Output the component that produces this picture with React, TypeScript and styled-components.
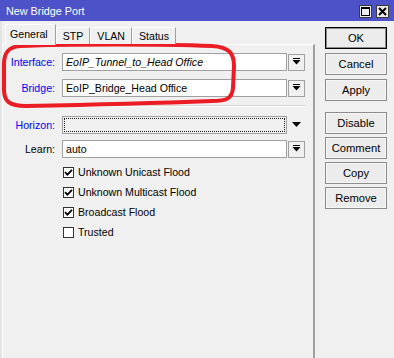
import React from 'react';
import styled, { createGlobalStyle } from 'styled-components';

const GlobalStyle = createGlobalStyle`
  html, body {
    margin: 0;
    padding: 0;
    background: #f0f0f0;
  }
  body {
    font-family: "Liberation Sans", Arial, sans-serif;
    font-size: 10.6px;
    color: #000;
  }
`;

const Window = styled.div`
  position: relative;
  width: 394px;
  height: 358px;
  overflow: hidden;
  display: flex;
  flex-direction: column;
  background: #f0f0f0;
`;

const TitleBar = styled.div`
  height: 21px;
  flex: none;
  display: flex;
  align-items: center;
  padding: 0 5px 0 6px;
  background: #4d52c9;
  color: #fff;
  font-size: 10.8px;
`;

const TitleText = styled.span`
  flex: 1;
  padding-top: 1px;
`;

const TitleButtons = styled.div`
  display: flex;
  gap: 4px;
  margin-top: 2px;
`;

const TitleButton = styled.div`
  width: 13px;
  height: 13px;
  box-sizing: border-box;
  background: #ececec;
  border: 1px solid #3a3a3a;
  display: flex;
  align-items: center;
  justify-content: center;
`;

const Body = styled.div`
  flex: 1;
  display: flex;
  padding-top: 3px;
  border-left: 2px solid #e4e4e4;
  min-height: 0;
`;

const TabArea = styled.div`
  width: 313px;
  display: flex;
  flex-direction: column;
`;

const TabStrip = styled.div`
  display: flex;
  align-items: flex-end;
  height: 20px;
  padding-left: 3px;
  position: relative;
  z-index: 1;
`;

const Tab = styled.div<{ $active?: boolean }>`
  box-sizing: border-box;
  height: ${p => (p.$active ? '21px' : '17px')};
  margin-bottom: ${p => (p.$active ? '-1px' : '0')};
  padding: ${p => (p.$active ? '3px 7px 0 4px' : '2px 6px 0')};
  background: #f0f0f0;
  border-top: 1px solid #fff;
  border-left: 1px solid #fff;
  border-right: 1px solid #a0a0a0;
  white-space: nowrap;
`;

const Panel = styled.div`
  flex: 1;
  box-sizing: border-box;
  border-top: 1px solid #fff;
  border-left: 1px solid #fff;
  border-right: 2px solid #a0a0a0;
  padding: 8px 8px 0 0;
  display: flex;
  flex-direction: column;
`;

const Row = styled.div<{ $gap?: number }>`
  display: flex;
  align-items: center;
  height: 18px;
  margin-bottom: ${p => p.$gap ?? 8}px;
`;

const Label = styled.span<{ $blue?: boolean }>`
  width: 52px;
  margin-right: 7px;
  text-align: right;
  color: ${p => (p.$blue ? '#0000ff' : '#000')};
`;

const Field = styled.div<{ $italic?: boolean; $focused?: boolean }>`
  flex: 1;
  height: 18px;
  box-sizing: border-box;
  border: 1px solid #a0a0a0;
  background: ${p => (p.$focused ? '#f0f0f0' : '#fff')};
  padding: 2px 3px 0;
  font-style: ${p => (p.$italic ? 'italic' : 'normal')};
  white-space: nowrap;
  overflow: hidden;
  position: relative;
  ${p =>
    p.$focused &&
    `&::after {
      content: '';
      position: absolute;
      inset: 1px;
      border: 1px dotted #202020;
    }`}
`;

const DropButton = styled.div<{ $plain?: boolean }>`
  width: 17px;
  height: 17px;
  margin-left: 1px;
  box-sizing: border-box;
  border: 1px solid ${p => (p.$plain ? 'transparent' : '#a0a0a0')};
  background: #f0f0f0;
  display: flex;
  align-items: center;
  justify-content: center;
`;

const Separator = styled.div`
  height: 0;
  margin: 0 0 9px 9px;
  border-top: 1px solid #d6d6d6;
  border-bottom: 1px solid #fff;
`;

const CheckList = styled.div`
  display: flex;
  flex-direction: column;
  padding-left: 60px;
  margin-top: 4px;
`;

const CheckRow = styled.div`
  display: flex;
  align-items: center;
  height: 20px;
  gap: 4px;
`;

const Box = styled.div`
  width: 11px;
  height: 11px;
  box-sizing: border-box;
  border: 1px solid #333;
  background: #fff;
  display: flex;
  align-items: center;
  justify-content: center;
`;

const ButtonColumn = styled.div`
  width: 62px;
  margin-left: 10px;
  padding-top: 3px;
  display: flex;
  flex-direction: column;
`;

const ButtonGroup = styled.div<{ $gap: number; $top?: number }>`
  display: flex;
  flex-direction: column;
  gap: ${p => p.$gap}px;
  margin-top: ${p => p.$top ?? 0}px;
`;

const Button = styled.div<{ $default?: boolean }>`
  height: 22px;
  box-sizing: border-box;
  border: 1px solid ${p => (p.$default ? '#000' : '#8c8c8c')};
  box-shadow: inset 0 0 0 1px ${p => (p.$default ? '#8c8c8c' : '#f6f6f6')};
  background: #ececec;
  display: flex;
  align-items: center;
  justify-content: center;
  font-size: 11.2px;
`;

const Annotation = styled.svg`
  position: absolute;
  left: 0;
  top: 0;
  pointer-events: none;
`;

const DropIcon = ({ bar = true }: { bar?: boolean }) => (
  <svg width="9" height="8" viewBox="0 0 9 8">
    {bar && <rect x="1" y="0" width="7" height="1" fill="#000" />}
    <polygon points={bar ? '0.5,2 8.5,2 4.5,6.5' : '0,1 9,1 4.5,6'} fill="#000" />
  </svg>
);

const CheckMark = () => (
  <svg width="9" height="9" viewBox="0 0 9 9">
    <path d="M1 4.2 L3.4 6.6 L8 1.8" stroke="#000" strokeWidth="1.8" fill="none" />
  </svg>
);

const checks = [
  { label: 'Unknown Unicast Flood', on: true },
  { label: 'Unknown Multicast Flood', on: true },
  { label: 'Broadcast Flood', on: true },
  { label: 'Trusted', on: false },
];

const App: React.FC = () => {
  return (
    <>
      <GlobalStyle />
      <Window>
        <TitleBar>
          <TitleText>New Bridge Port</TitleText>
          <TitleButtons>
            <TitleButton>
              <svg width="9" height="9" viewBox="0 0 9 9">
                <rect x="0.5" y="0.5" width="8" height="8" stroke="#000" fill="none" />
                <rect x="0" y="0" width="9" height="2" fill="#000" />
              </svg>
            </TitleButton>
            <TitleButton>
              <svg width="9" height="9" viewBox="0 0 9 9">
                <path d="M1 1 L8 8 M8 1 L1 8" stroke="#000" strokeWidth="2" />
              </svg>
            </TitleButton>
          </TitleButtons>
        </TitleBar>

        <Body>
          <TabArea>
            <TabStrip>
              <Tab $active>General</Tab>
              <Tab>STP</Tab>
              <Tab>VLAN</Tab>
              <Tab>Status</Tab>
            </TabStrip>
            <Panel>
              <Row>
                <Label $blue>Interface:</Label>
                <Field $italic>EoIP_Tunnel_to_Head Office</Field>
                <DropButton><DropIcon /></DropButton>
              </Row>
              <Row>
                <Label $blue>Bridge:</Label>
                <Field>EoIP_Bridge_Head Office</Field>
                <DropButton><DropIcon /></DropButton>
              </Row>
              <Separator />
              <Row $gap={6}>
                <Label $blue>Horizon:</Label>
                <Field $focused />
                <DropButton $plain><DropIcon bar={false} /></DropButton>
              </Row>
              <Row $gap={0}>
                <Label>Learn:</Label>
                <Field>auto</Field>
                <DropButton><DropIcon /></DropButton>
              </Row>
              <CheckList>
                {checks.map(c => (
                  <CheckRow key={c.label}>
                    <Box>{c.on && <CheckMark />}</Box>
                    <span>{c.label}</span>
                  </CheckRow>
                ))}
              </CheckList>
            </Panel>
          </TabArea>

          <ButtonColumn>
            <ButtonGroup $gap={4}>
              <Button $default>OK</Button>
              <Button>Cancel</Button>
              <Button>Apply</Button>
            </ButtonGroup>
            <ButtonGroup $gap={3} $top={11}>
              <Button>Disable</Button>
              <Button>Comment</Button>
              <Button>Copy</Button>
              <Button>Remove</Button>
            </ButtonGroup>
          </ButtonColumn>
        </Body>

        {/* red hand-drawn highlight around Interface / Bridge */}
        <Annotation width="394" height="358" viewBox="0 0 394 358">
          <path
            d="M20 46 C70 44 160 44 212 46 C230 47 234 54 234 66 L233 88 C232 99 226 101 212 101 C160 103 80 105 26 106 C9 106 4 101 4 90 L4 64 C4 53 8 47 20 46 Z"
            stroke="#ec1c24"
            strokeWidth="4"
            fill="none"
          />
        </Annotation>
      </Window>
    </>
  );
};

export default App;
